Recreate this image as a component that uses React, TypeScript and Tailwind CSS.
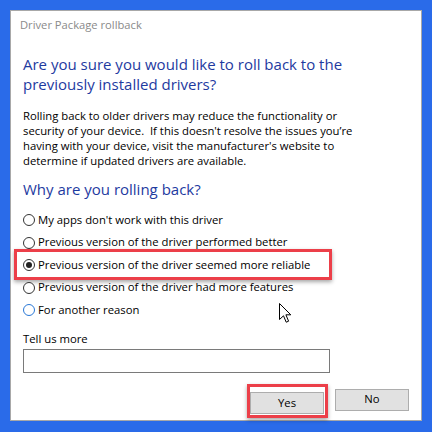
const reasons = [
  "My apps don't work with this driver",
  "Previous version of the driver performed better",
  "Previous version of the driver seemed more reliable",
  "Previous version of the driver had more features",
  "For another reason",
];

function Radio({ checked, focus }: { checked?: boolean; focus?: boolean }) {
  return (
    <span
      className={`flex items-center justify-center w-[12px] h-[12px] rounded-full border bg-white mr-[3px] shrink-0 ${
        focus ? "border-[#2a78d6]" : "border-[#333333]"
      }`}
    >
      {checked && <span className="w-[6px] h-[6px] rounded-full bg-[#222222]" />}
    </span>
  );
}

export default function App() {
  const selected = 2;

  return (
    <div className="w-[432px] h-[432px] bg-[#2a6be9] pt-[10px] pl-[10px] font-['Open_Sans',sans-serif] overflow-hidden">
      <div className="relative w-[412px] h-[411px] bg-white border border-[#a8a8a8] px-[12px] pt-[6px]">
        {/* Window title */}
        <div className="-ml-[3px] text-[11.2px] leading-[15px] text-[#8a8a8a]">
          Driver Package rollback
        </div>

        <h1 className="mt-[22px] text-[15px] leading-[20px] text-[#1e3a9f]">
          Are you sure you would like to roll back to the
          <br />
          previously installed drivers?
        </h1>

        <p className="mt-[14px] text-[11.3px] leading-[15px] text-black">
          Rolling back to older drivers may reduce the functionality or
          <br />
          security of your device.&nbsp; If this doesn't resolve the issues you’re
          <br />
          having with your device, visit the manufacturer's website to
          <br />
          determine if updated drivers are available.
        </p>

        <h2 className="mt-[11px] text-[15px] leading-[20px] text-[#1e3a9f]">
          Why are you rolling back?
        </h2>

        {/* Reasons */}
        <div className="mt-[10px] flex flex-col">
          {reasons.map((r, i) => (
            <div key={r} className="relative flex items-center h-[22.5px] text-[11.3px] text-black">
              {i === selected && (
                <div className="absolute -left-[9px] top-[-4.75px] w-[318px] h-[31px] border-[3px] border-[#ec3f49] shadow-[0_2px_4px_rgba(0,0,0,0.35)]" />
              )}
              <Radio checked={i === selected} focus={i === reasons.length - 1} />
              <span>{r}</span>
            </div>
          ))}
        </div>

        <div className="mt-[9px] text-[11.3px] leading-[15px] text-black">Tell us more</div>
        <div className="mt-[3px] w-[307px] h-[24px] border border-[#7a7a7a] bg-white" />

        {/* Buttons */}
        <div className="mt-[16px] flex justify-end gap-[11px]">
          <div className="relative">
            <div className="absolute -left-[3px] -top-[5px] -right-[4px] -bottom-[4px] border-[3px] border-[#ec3f49] shadow-[0_2px_4px_rgba(0,0,0,0.35)]" />
            <button className="relative w-[74px] h-[22px] bg-[#e1e1e1] border border-[#adadad] text-[11.3px] text-black">
              Yes
            </button>
          </div>
          <button className="w-[74px] h-[22px] bg-[#e1e1e1] border border-[#adadad] text-[11.3px] text-black">
            No
          </button>
        </div>

        {/* Mouse pointer */}
        <svg
          className="absolute left-[268px] top-[292px]"
          width="13"
          height="20"
          viewBox="0 0 13 20"
        >
          <path
            d="M0.5 0.5 L0.5 16.5 L4.5 12.8 L7.2 19.2 L9.6 18.2 L6.9 11.8 L11.8 11.8 Z"
            fill="white"
            stroke="black"
            strokeWidth="1"
            strokeLinejoin="miter"
          />
        </svg>
      </div>
    </div>
  );
}
